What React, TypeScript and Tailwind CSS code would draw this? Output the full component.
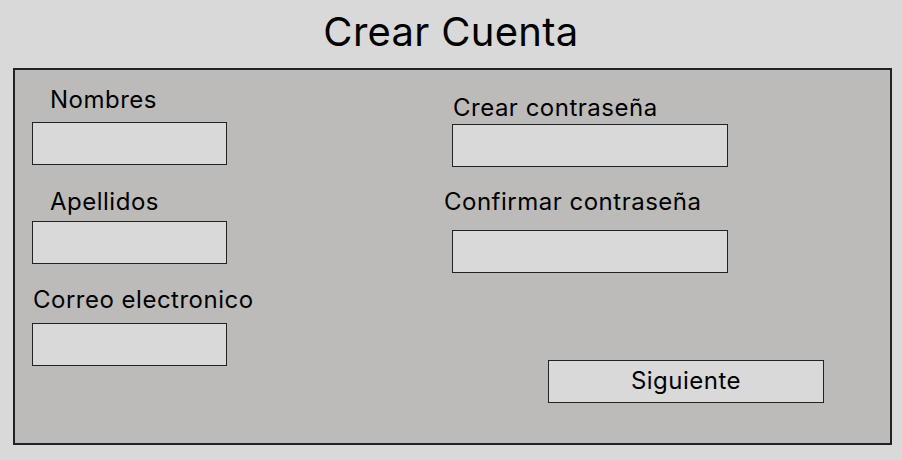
const Field = ({ label, labelClass, boxClass }: { label: string; labelClass: string; boxClass: string }) => (
  <div className="flex flex-col">
    <p className={`text-[24px] leading-[29px] tracking-[0.5px] text-black ${labelClass}`}>{label}</p>
    <div className={`h-[43px] bg-[#d9d9d9] border-[1.5px] border-[#222] ${boxClass}`} />
  </div>
);

export default function App() {
  return (
    <div
      className="w-full h-[460px] bg-[#d9d9d9] text-black"
      style={{ fontFamily: "Inter, 'Noto Sans', sans-serif" }}
    >
      <h1 className="h-[68px] flex items-center justify-center text-[40px] leading-[48px] tracking-[0.3px] pb-[4px]">
        Crear Cuenta
      </h1>
      <div className="ml-[13px] w-[879px] h-[377px] bg-[#bcbbb9] border-2 border-[#222] flex">
        <div className="w-[415px] pl-[17px] flex flex-col">
          <Field label="Nombres" labelClass="mt-[15px] pl-[18px] mb-[8px]" boxClass="w-[195px]" />
          <Field label="Apellidos" labelClass="mt-[22px] pl-[18px] mb-[5px]" boxClass="w-[195px]" />
          <Field label="Correo electronico" labelClass="mt-[21px] pl-[1px] mb-[9px]" boxClass="w-[195px]" />
        </div>
        <div className="flex flex-col">
          <Field label="Crear contraseña" labelClass="mt-[23px] pl-[23px] mb-[2px]" boxClass="w-[276px] ml-[22px]" />
          <Field label="Confirmar contraseña" labelClass="mt-[20px] pl-[14px] mb-[14px]" boxClass="w-[276px] ml-[22px]" />
          <button className="mt-[87px] ml-[118px] w-[276px] h-[43px] bg-[#d9d9d9] border-[1.5px] border-[#222] text-[24px] tracking-[0.5px] leading-none flex items-center justify-center pb-[1px]">
            Siguiente
          </button>
        </div>
      </div>
    </div>
  );
}
